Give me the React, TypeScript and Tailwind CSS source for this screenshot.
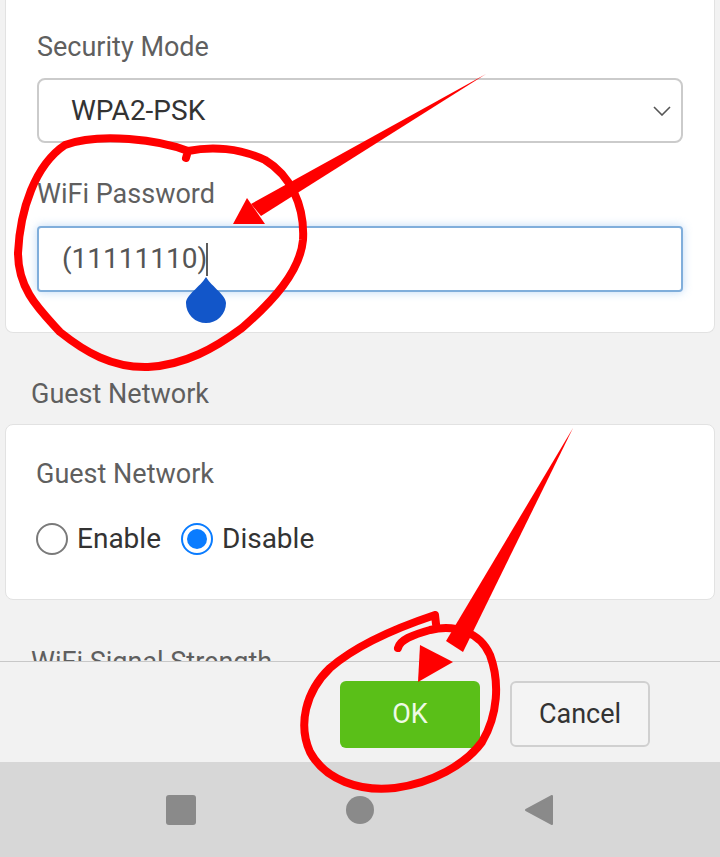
import React from "react"

const FONT = { fontFamily: "Roboto, 'Noto Sans', Arial, sans-serif" }

const Label: React.FC<{ children: React.ReactNode; className?: string }> = ({
	children,
	className = "",
}) => (
	<div className={`text-[27px] leading-[30px] text-[#5f5f5f] ${className}`}>
		{children}
	</div>
)

const Radio = ({ checked, label }: { checked: boolean; label: string }) => (
	<label className="flex items-center gap-[9px]">
		{checked ? (
			<span className="flex h-[32px] w-[32px] items-center justify-center rounded-full border-[2px] border-[#0a7cff] bg-white">
				<span className="h-[20px] w-[20px] rounded-full bg-[#0a7cff]" />
			</span>
		) : (
			<span className="h-[32px] w-[32px] rounded-full border-[2px] border-[#7a7a7a] bg-white" />
		)}
		<span className="text-[28px] leading-[32px] text-[#333]">{label}</span>
	</label>
)

const Annotations = () => (
	<svg
		className="pointer-events-none absolute inset-0"
		width={720}
		height={857}
		viewBox="0 0 720 857"
	>
		{/* text cursor + drop handle */}
		<line x1={207} y1={243} x2={207} y2={276} stroke="#333" strokeWidth={1.6} />
		<path
			d="M206,277 C212,287 226,295 226,303 A20,20 0 1 1 186,303 C186,295 200,287 206,277 Z"
			fill="#1256c9"
		/>
		<g fill="none" stroke="#ff0000" strokeWidth={8} strokeLinecap="round" strokeLinejoin="round">
			<path d="M186,158 L188,151 C160,140 100,132 65,145 C35,165 20,210 18,253 C18,290 40,310 60,332 C85,352 112,368 148,367 C185,365 215,348 242,328 C272,302 300,272 303,240 C305,205 290,175 265,160 C240,148 212,146 188,151" />
			<path d="M436,624 L435,615 C405,625 360,642 330,668 C305,692 298,725 310,752 C325,780 360,792 395,788 C432,783 465,765 482,742 C498,715 500,682 490,655 C480,632 455,624 430,630 C412,635 400,640 398,648" />
		</g>
		<g fill="#ff0000">
			<polygon points="486,74 261,216 251,204" />
			<polygon points="233,224 247,198 265,224" />
			<polygon points="573,428 463,652 446,641" />
			<polygon points="418,682 420,645 453,662" />
		</g>
	</svg>
)

const App = () => {
	return (
		<div
			className="relative flex h-[857px] w-[720px] flex-col overflow-hidden bg-[#f2f2f2]"
			style={FONT}
		>
			<div className="flex-1 overflow-hidden">
				<div className="mx-[5px] rounded-b-[8px] border border-t-0 border-[#e2e2e2] bg-white px-[31px] pb-[40px] pt-[32px]">
					<Label>Security Mode</Label>
					<div className="mt-[16px] flex h-[65px] items-center justify-between rounded-[8px] border-[2px] border-[#cbcbcb] bg-white pl-[32px] pr-[10px]">
						<span className="text-[28px] text-[#333]">WPA2-PSK</span>
						<svg width="18" height="10" viewBox="0 0 18 10">
							<path d="M1,1 L9,9 L17,1" fill="none" stroke="#555" strokeWidth="1.6" />
						</svg>
					</div>
					<Label className="mt-[36px]">WiFi Password</Label>
					<div className="mt-[17px] flex h-[66px] items-center rounded-[4px] border-[2px] border-[#80aedb] bg-white pl-[23px] shadow-[0_0_10px_rgba(110,170,235,0.45)]">
						<span className="text-[28px] text-[#555]">(11111110)</span>
					</div>
				</div>

				<Label className="mt-[46px] pl-[31px]">Guest Network</Label>

				<div className="mx-[5px] mt-[15px] rounded-[8px] border border-[#e2e2e2] bg-white px-[30px] pb-[44px] pt-[34px]">
					<Label>Guest Network</Label>
					<div className="mt-[34px] flex items-center gap-[20px]">
						<Radio checked={false} label="Enable" />
						<Radio checked label="Disable" />
					</div>
				</div>

				<Label className="mt-[47px] pl-[31px]">WiFi Signal Strength</Label>
			</div>

			<div className="flex h-[101px] shrink-0 items-start justify-end gap-[30px] border-t border-[#c8c8c8] bg-[#f2f2f2] pr-[70px] pt-[19px]">
				<button className="flex h-[67px] w-[140px] items-center justify-center rounded-[6px] bg-[#5abf18] text-[27px] text-[#effae6]">
					OK
				</button>
				<button className="flex h-[66px] w-[140px] items-center justify-center rounded-[6px] border-[2px] border-[#d0d0d0] bg-[#f4f4f4] text-[27px] text-[#333]">
					Cancel
				</button>
			</div>

			<div className="flex h-[95px] shrink-0 items-center justify-center gap-[150px] bg-[#d7d7d7]">
				<div className="h-[30px] w-[30px] rounded-[3px] bg-[#8a8a8a]" />
				<div className="h-[28px] w-[28px] rounded-full bg-[#8a8a8a]" />
				<svg width="30" height="32" viewBox="0 0 30 32">
					<path d="M28,2 L28,30 L2,16 Z" fill="#8a8a8a" strokeLinejoin="round" stroke="#8a8a8a" strokeWidth="2" />
				</svg>
			</div>

			<Annotations />
		</div>
	)
}

export default App
